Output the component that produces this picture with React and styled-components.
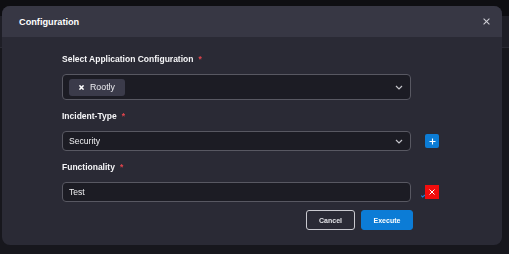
import styled, { createGlobalStyle } from "styled-components";

const GlobalStyle = createGlobalStyle`
  html, body {
    margin: 0;
    padding: 0;
    background: #17171d;
    font-family: "Liberation Sans", Arial, sans-serif;
  }
  * {
    box-sizing: border-box;
  }
`;

const Page = styled.div`
  width: 509px;
  height: 254px;
  display: flex;
  flex-direction: column;
  background: #17171d;
`;

const PageTop = styled.div`
  height: 16px;
  background: #0e0e12;
`;

const PageBar = styled.div`
  height: 32px;
  background: #1e1e26;
  border-bottom: 1px solid #2a2a33;
`;

const Modal = styled.div`
  position: fixed;
  top: 6px;
  left: 2px;
  width: 500px;
  height: 239px;
  border-radius: 8px;
  overflow: hidden;
  display: flex;
  flex-direction: column;
  background: #2a2a35;
`;

const Header = styled.div`
  height: 31px;
  flex-shrink: 0;
  display: flex;
  align-items: center;
  justify-content: space-between;
  padding: 0 10px 0 17px;
  background: #373744;
`;

const Title = styled.h2`
  margin: 0;
  font-size: 9.2px;
  font-weight: 700;
  color: #ffffff;
`;

const CloseButton = styled.button`
  width: 12px;
  height: 12px;
  padding: 0;
  border: none;
  background: transparent;
  display: flex;
  align-items: center;
  justify-content: center;
  cursor: pointer;
`;

const Body = styled.div`
  flex: 1;
  padding: 16px 0 0 60px;
  display: flex;
  flex-direction: column;
`;

const Label = styled.label`
  display: block;
  font-size: 8.5px;
  line-height: 12px;
  font-weight: 700;
  color: #f6f6f8;
  margin-bottom: 9px;
  span {
    color: #e0444c;
    margin-left: 5px;
  }
`;

const Field = styled.div`
  margin-bottom: 10px;
`;

const Row = styled.div`
  display: grid;
  grid-template-columns: 349px 40px;
  align-items: center;
`;

const Control = styled.div`
  height: ${(p) => p.$height}px;
  border: 1px solid #585862;
  border-radius: 4px;
  background: #1c1c24;
  display: flex;
  align-items: center;
  justify-content: space-between;
  padding: 0 7px 0 ${(p) => p.$padLeft}px;
  font-size: 8.6px;
  color: #f0f0f2;
`;

const Chip = styled.div`
  height: 17px;
  display: flex;
  align-items: center;
  gap: 6px;
  padding: 0 10px;
  border-radius: 3px;
  background: #3b3b4a;
  font-size: 8.8px;
  color: #ececf0;
`;

const Side = styled.div`
  display: flex;
  align-items: center;
  padding-left: ${(p) => p.$offset}px;
`;

const IconButton = styled.button`
  width: 14px;
  height: 14px;
  padding: 0;
  border: none;
  border-radius: ${(p) => (p.$danger ? "0" : "2px")};
  background: ${(p) => (p.$danger ? "#f20d0d" : "#0c7cd5")};
  display: flex;
  align-items: center;
  justify-content: center;
  cursor: pointer;
`;

const Footer = styled.div`
  width: 351px;
  display: flex;
  justify-content: flex-end;
  gap: 6px;
  margin-top: -2px;
`;

const Button = styled.button`
  height: 20px;
  width: ${(p) => p.$width}px;
  padding: 0;
  border-radius: 3px;
  font-family: "Liberation Sans", Arial, sans-serif;
  font-size: 7px;
  font-weight: 700;
  cursor: pointer;
  color: ${(p) => (p.$primary ? "#ffffff" : "#e2e2e6")};
  background: ${(p) => (p.$primary ? "#0c7cd6" : "transparent")};
  border: 1px solid ${(p) => (p.$primary ? "#0c7cd6" : "#c9c9cf")};
`;

const Chevron = () => (
  <svg width="8" height="5" viewBox="0 0 8 5">
    <path d="M1 1 L4 4 L7 1" fill="none" stroke="#c4c4ca" strokeWidth="1.2" />
  </svg>
);

const Cross = ({ size = 6, color = "#d4d4da", width = 1.2 }) => (
  <svg width={size} height={size} viewBox="0 0 6 6">
    <path d="M0.5 0.5 L5.5 5.5 M5.5 0.5 L0.5 5.5" stroke={color} strokeWidth={width} />
  </svg>
);

const App = () => {
  return (
    <>
      <GlobalStyle />
      <Page>
        <PageTop />
        <PageBar />
      </Page>
      <Modal>
        <Header>
          <Title>Configuration</Title>
          <CloseButton>
            <Cross size={7} color="#cfcfd6" width={0.9} />
          </CloseButton>
        </Header>
        <Body>
          <Field>
            <Label>
              Select Application Configuration<span>*</span>
            </Label>
            <Row>
              <Control $height={26} $padLeft={6}>
                <Chip>
                  <Cross size={5} color="#ffffff" width={1.9} />
                  Rootly
                </Chip>
                <Chevron />
              </Control>
            </Row>
          </Field>
          <Field>
            <Label>
              Incident-Type<span>*</span>
            </Label>
            <Row>
              <Control $height={20} $padLeft={6}>
                Security
                <Chevron />
              </Control>
              <Side $offset={14}>
                <IconButton>
                  <svg width="7" height="7" viewBox="0 0 7 7">
                    <path d="M3.5 0.5 V6.5 M0.5 3.5 H6.5" stroke="#ffffff" strokeWidth="1.1" />
                  </svg>
                </IconButton>
              </Side>
            </Row>
          </Field>
          <Field>
            <Label>
              Functionality<span>*</span>
            </Label>
            <Row>
              <Control $height={20} $padLeft={6}>
                Test
              </Control>
              <Side $offset={10}>
                <svg width="4" height="14" viewBox="0 0 4 14">
                  <path d="M0.3 10.5 L1.6 12 L4 10" fill="none" stroke="#1a84dd" strokeWidth="1.1" />
                </svg>
                <IconButton $danger>
                  <Cross size={6} color="#ffffff" width={1} />
                </IconButton>
              </Side>
            </Row>
          </Field>
          <Footer>
            <Button $width={49}>Cancel</Button>
            <Button $width={52} $primary>
              Execute
            </Button>
          </Footer>
        </Body>
      </Modal>
    </>
  );
};

export default App;
